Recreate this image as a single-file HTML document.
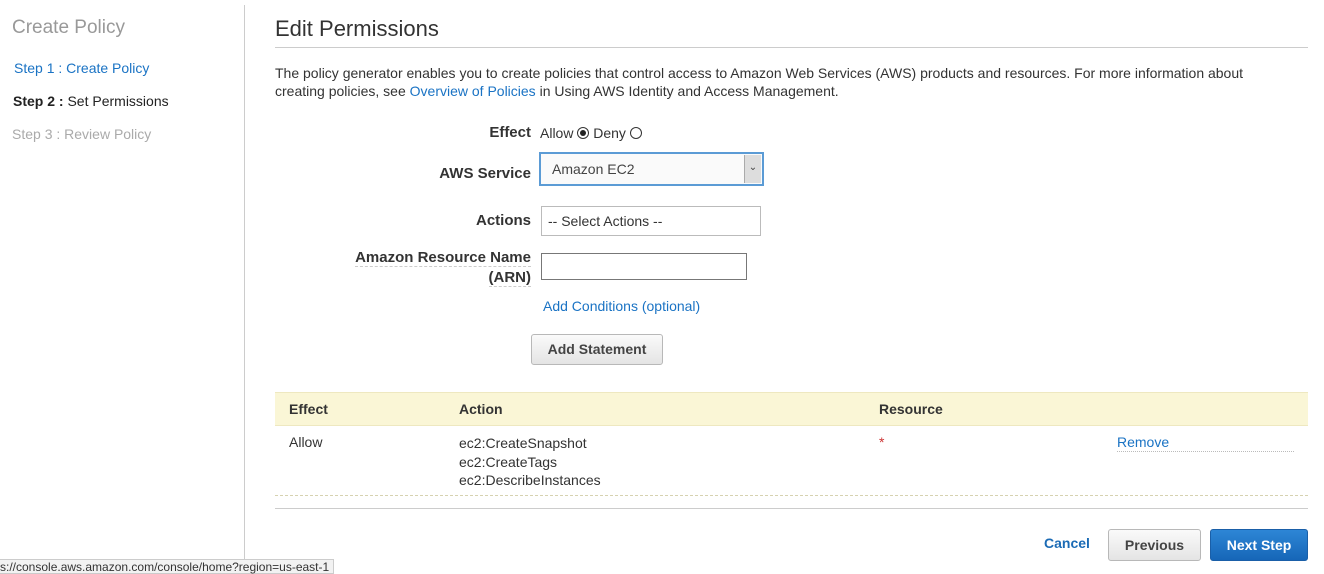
<!DOCTYPE html>
<html><head><meta charset="utf-8"><style>
*{margin:0;padding:0;box-sizing:border-box}
body{width:1324px;height:574px;position:relative;background:#fff;font-family:"Liberation Sans",Arial,sans-serif;font-size:14px;color:#333;overflow:hidden}
.a{position:absolute;white-space:nowrap}
.blue{color:#1a73c4}
.b{font-weight:bold}
.lab{font-weight:bold;font-size:15px;color:#333;text-align:right}
.btn{position:absolute;border:1px solid #b8b8b8;border-radius:3px;background:linear-gradient(#fafafa,#e4e4e4);font-weight:bold;font-size:14px;color:#444;text-align:center}
.radio{display:inline-block;width:12px;height:12px;border:1px solid #333;border-radius:50%;vertical-align:-1px;position:relative}
.radio.on::after{content:"";position:absolute;left:2px;top:2px;width:6px;height:6px;border-radius:50%;background:#222}
</style></head><body>
<div class="a" style="left:12px;top:17px;font-size:19px;color:#999">Create Policy</div>
<div class="a blue" style="left:14px;top:60px">Step 1 : Create Policy</div>
<div class="a" style="left:13px;top:93px;color:#222"><b>Step 2 :</b> Set Permissions</div>
<div class="a" style="left:12px;top:126px;color:#aaa">Step 3 : Review Policy</div>
<div class="a" style="left:244px;top:5px;width:1px;height:569px;background:#ccc"></div>

<div class="a" style="left:275px;top:16px;font-size:22px;color:#333">Edit Permissions</div>
<div class="a" style="left:275px;top:47px;width:1033px;height:1px;background:#ccc"></div>
<div class="a" style="left:275px;top:64px;line-height:18px">The policy generator enables you to create policies that control access to Amazon Web Services (AWS) products and resources. For more information about<br>creating policies, see <span class="blue">Overview of Policies</span> in Using AWS Identity and Access Management.</div>

<div class="a lab" style="left:430px;top:124px;width:101px">Effect</div>
<div class="a" style="left:540px;top:125px">Allow <span class="radio on"></span> Deny <span class="radio"></span></div>

<div class="a lab" style="left:400px;top:165px;width:131px">AWS Service</div>
<div class="a" style="left:539px;top:152px;width:225px;height:34px;border:2px solid #5b9bd5;background:#fafafa">
 <div class="a" style="left:11px;top:7px;color:#444">Amazon EC2</div>
 <div class="a" style="right:1px;top:1px;width:17px;height:28px;background:#ddd;border-left:1px solid #aaa;font-size:10px;text-align:center;line-height:26px;color:#444">&#8964;</div>
</div>

<div class="a lab" style="left:400px;top:212px;width:131px">Actions</div>
<div class="a" style="left:541px;top:206px;width:220px;height:30px;border:1px solid #bbb;padding:6px 0 0 6px">-- Select Actions --</div>

<div class="a lab" style="left:340px;top:248px;width:191px;line-height:20px"><span style="border-bottom:1px dashed #ccc">Amazon Resource Name</span><br><span style="border-bottom:1px dashed #ccc">(ARN)</span></div>
<div class="a" style="left:541px;top:253px;width:206px;height:27px;border:1px solid #777"></div>

<div class="a blue" style="left:543px;top:298px">Add Conditions (optional)</div>
<div class="btn" style="left:531px;top:334px;width:132px;height:31px;line-height:29px">Add Statement</div>

<div class="a" style="left:275px;top:392px;width:1033px;height:34px;background:#faf6d6;border-top:1px solid #eee8c0;border-bottom:1px solid #eee8c0"></div>
<div class="a b" style="left:289px;top:401px">Effect</div>
<div class="a b" style="left:459px;top:401px">Action</div>
<div class="a b" style="left:879px;top:401px">Resource</div>
<div class="a" style="left:289px;top:434px">Allow</div>
<div class="a" style="left:459px;top:434px;line-height:18.5px">ec2:CreateSnapshot<br>ec2:CreateTags<br>ec2:DescribeInstances</div>
<div class="a" style="left:879px;top:434px;color:#c33">*</div>
<div class="a blue" style="left:1117px;top:434px;width:177px;border-bottom:1px dotted #bbb;padding-bottom:1px">Remove</div>
<div class="a" style="left:275px;top:495px;width:1033px;border-top:1px dashed #d6d2b0"></div>
<div class="a" style="left:275px;top:508px;width:1033px;height:1px;background:#ccc"></div>

<div class="a b blue" style="left:1044px;top:535px;color:#1b6bb5">Cancel</div>
<div class="btn" style="left:1108px;top:529px;width:93px;height:32px;line-height:30px">Previous</div>
<div class="btn" style="left:1210px;top:529px;width:98px;height:32px;line-height:30px;background:linear-gradient(#2d86d6,#1666b8);border-color:#1a5fa8;color:#fff">Next Step</div>

<div class="a" style="left:0;top:559px;width:334px;height:15px;background:#f2f2f2;border:1px solid #ccc;border-left:none;font-size:12px;color:#333;line-height:14px">s://console.aws.amazon.com/console/home?region=us-east-1</div>
</body></html>
